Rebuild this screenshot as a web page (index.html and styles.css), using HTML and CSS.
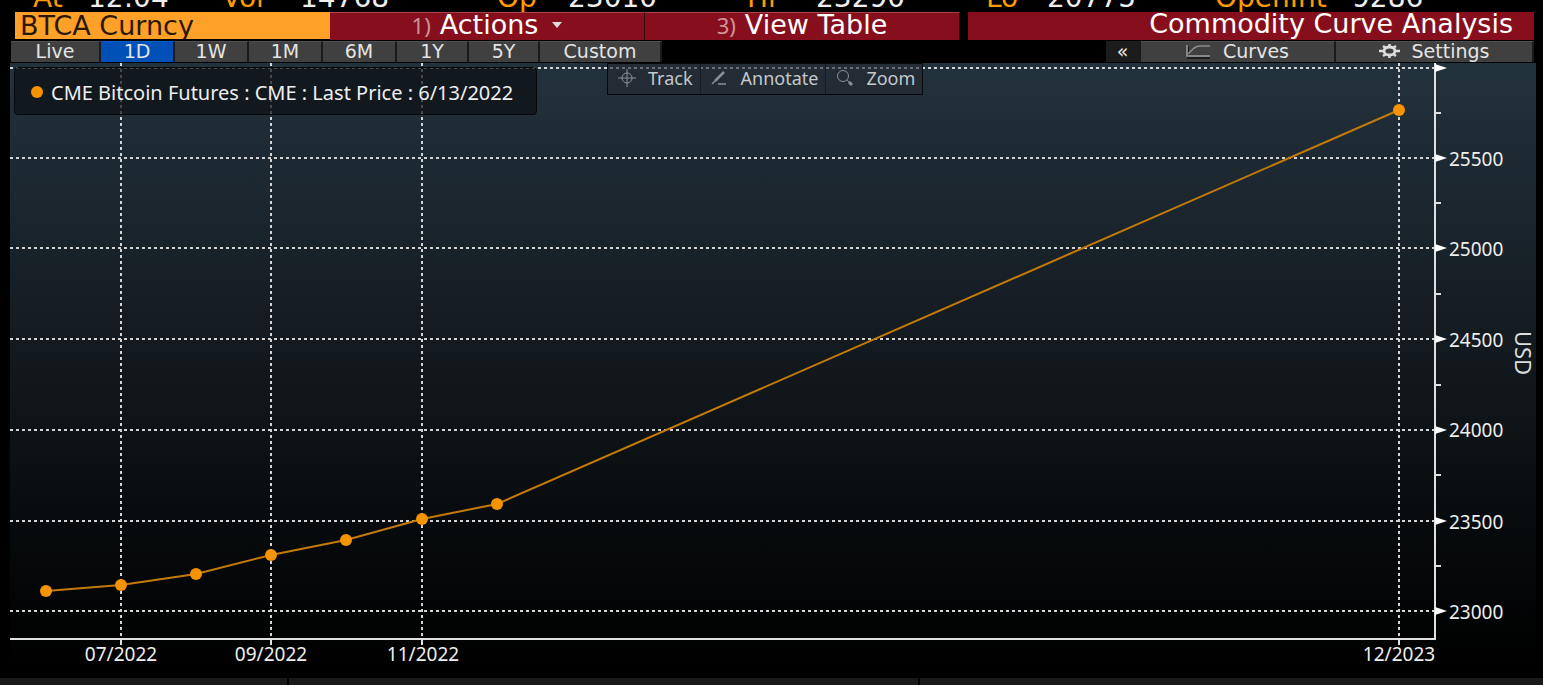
FILE: index.html
```html
<!DOCTYPE html>
<html lang="en">
<head>
  <meta charset="UTF-8">
  <title>Commodity Curve Analysis</title>
  <link rel="stylesheet" href="styles.css">
</head>
<body>

  <!-- QUOTE LINE -->
  <div class="quote">
    <span class="key">At</span><span>12:04</span>
    <span class="key">Vol</span><span>14768</span>
    <span class="key">Op</span><span>23010</span>
    <span class="key">Hi</span><span>23290</span>
    <span class="key">Lo</span><span>20775</span>
    <span class="key">OpenInt</span><span>9286</span>
  </div>

  <!-- MENU BAR -->
  <header class="menu">
    <input class="ticker" type="text" value="BTCA Curncy" aria-label="Security">
    <button class="menu-btn"><span class="num">1)</span> Actions
      <svg class="caret" width="10" height="6" viewBox="0 0 10 6"><path d="M0 0H10L5 6Z" fill="#ddd"/></svg>
    </button>
    <button class="menu-btn"><span class="num">3)</span> View Table</button>
    <h1>Commodity Curve Analysis</h1>
  </header>

  <!-- RANGE TABS -->
  <nav class="tabs">
    <button>Live</button>
    <button class="active">1D</button>
    <button>1W</button>
    <button>1M</button>
    <button>6M</button>
    <button>1Y</button>
    <button>5Y</button>
    <button>Custom</button>
    <span></span>
    <button class="collapse">«</button>
    <button>
      <svg width="25" height="16" viewBox="0 0 25 16" fill="none"><path d="M2 3V15H24" stroke="#1c1c1c" stroke-width="2"/><path d="M1 2V13H24" stroke="#a0a0a0" stroke-width="1.500"/><path d="M2 11L7 6Q10 3 14 3H24" stroke="#8c8c8c" stroke-width="1.500"/></svg>
      Curves
    </button>
    <button>
      <svg width="21" height="16" viewBox="0 0 21 16" fill="none" stroke="#ddd"><ellipse cx="10.500" cy="8" rx="5.500" ry="4" stroke-width="2.800"/><path d="M10.500 1V4M10.500 12V15M0 8H5M16 8H21M4 3L7 5M17 3L14 5M4 13L7 11M17 13L14 11" stroke-width="2.500"/></svg>
      Settings
    </button>
  </nav>

  <!-- CHART -->
  <main class="chart">
    <svg class="plot" viewBox="10 63 1526 609" role="img" aria-label="CME Bitcoin Futures curve">
      <g class="grid">
        <path d="M10 68H1435M10 158H1435M10 248H1435M10 339H1435M10 430H1435M10 521H1435M10 611H1435"/>
        <path d="M121 63V639M271 63V639M422 63V639M1399 63V639"/>
      </g>
      <path class="axis" d="M10 639H1435V63"/>
      <path class="tick" d="M1435 113h6M1435 203h6M1435 294h6M1435 385h6M1435 475h6M1435 566h6M121 639v6M271 639v6M422 639v6M1399 639v6"/>
      <path class="arrow" d="M1435 64l12 4l-12 4zM1435 154l12 4l-12 4zM1435 244l12 4l-12 4zM1435 335l12 4l-12 4zM1435 426l12 4l-12 4zM1435 517l12 4l-12 4zM1435 607l12 4l-12 4z"/>

      <polyline class="line" points="46,591 121,585 196,574 271,555 346,540 422,519 497,504 1399,110"/>
      <g class="dots">
        <circle cx="46" cy="591" r="6"/>
        <circle cx="121" cy="585" r="6"/>
        <circle cx="196" cy="574" r="6"/>
        <circle cx="271" cy="555" r="6"/>
        <circle cx="346" cy="540" r="6"/>
        <circle cx="422" cy="519" r="6"/>
        <circle cx="497" cy="504" r="6"/>
        <circle cx="1399" cy="110" r="6"/>
      </g>

      <g class="labels">
        <text x="1449" y="166">25500</text>
        <text x="1449" y="256">25000</text>
        <text x="1449" y="347">24500</text>
        <text x="1449" y="437">24000</text>
        <text x="1449" y="529">23500</text>
        <text x="1449" y="619">23000</text>
      </g>
      <g class="labels dates">
        <text x="121" y="661">07/2022</text>
        <text x="271" y="661">09/2022</text>
        <text x="423" y="661">11/2022</text>
        <text x="1399" y="661">12/2023</text>
      </g>
      <text class="unit" transform="translate(1515 353) rotate(90)">USD</text>
    </svg>

    <div class="legend"><span class="dot"></span>CME Bitcoin Futures : CME : Last Price : 6/13/2022</div>

    <div class="tools">
      <button>
        <svg width="18" height="18" viewBox="0 0 18 18" fill="none" stroke="#8a9095"><path d="M9 0V18M0 9H18"/><circle cx="9" cy="9" r="5"/></svg>
        Track
      </button>
      <button>
        <svg width="18" height="18" viewBox="0 0 18 18" fill="none" stroke="#8a9095"><path d="M4 12L13 3" stroke-width="2.500"/><path d="M1 15L4 12M7 15H15" stroke-width="1.500"/></svg>
        Annotate
      </button>
      <button>
        <svg width="18" height="18" viewBox="0 0 18 18" fill="none" stroke="#8a9095"><circle cx="7" cy="7" r="5.500"/><path d="M11 11L13 13"/><path d="M13 13L16 16" stroke-width="3"/></svg>
        Zoom
      </button>
    </div>
  </main>

  <footer class="panels"><div></div><div></div><div></div></footer>

</body>
</html>
```

FILE: styles.css
```css
* {
  box-sizing: border-box;
}

body {
  margin: 0;
  background-color: #000;
  color: #eee;
  font-family: "DejaVu Sans", Verdana, sans-serif;
  overflow-x: hidden;
}

button {
  display: flex;
  align-items: center;
  justify-content: center;
  margin: 0;
  padding: 0;
  border: 0;
  color: inherit;
  font-family: inherit;
  white-space: nowrap;
}

/* QUOTE LINE */
.quote {
  display: grid;
  grid-template-columns: 55fr 134fr 78fr 197fr 71fr 179fr 69fr 170fr 61fr 168fr 137fr 191fr;
  grid-template-rows: 10px;
  align-items: end;
  height: 12px;
  padding-left: 33px;
  overflow: hidden;
  font-size: 28px;
  line-height: 24px;
  white-space: nowrap;
}

.quote .key {
  color: #f90;
}

/* MENU BAR */
.menu {
  display: grid;
  grid-template-columns: 315fr 315fr 323fr 566fr;
  height: 28px;
  margin: 0 9px 0 15px;
  font-size: 27px;
}

.ticker {
  width: 100%;
  min-width: 0;
  height: 27px;
  margin: 0;
  padding: 0 5px;
  border: 0;
  background-color: #ffa028;
  color: #2a1800;
  font-family: inherit;
  font-size: 27px;
  line-height: 27px;
}

.menu-btn {
  padding-bottom: 3px;
  border-top: 1px solid #a5434f;
  border-right: 1px solid #3a080e;
  background-color: #870f1d;
  color: #fff;
  font-size: 27px;
  line-height: 24px;
}

.menu-btn + .menu-btn {
  margin-right: 8px;
}

.num {
  margin-right: 9px;
  color: #cf929a;
  font-family: "Noto Sans", sans-serif;
  font-size: 22px;
}

.caret {
  margin-left: 14px;
}

h1 {
  margin: 0;
  padding-right: 21px;
  background-color: #870f1d;
  color: #fff;
  font-size: 27px;
  font-weight: normal;
  line-height: 24px;
  text-align: right;
  white-space: nowrap;
}

/* RANGE TABS */
.tabs {
  display: grid;
  grid-template-columns: 90fr 74fr 74fr 74fr 74fr 72fr 71fr 122fr 444fr 35fr 195fr 198fr;
  height: 23px;
  margin: 0 9px 0 11px;
  padding: 1px 0;
}

.tabs button {
  gap: 12px;
  min-width: 0;
  padding-bottom: 2px;
  border-top: 1px solid #505050;
  border-right: 2px solid #1a1a1a;
  background-color: #404040;
  color: #e4e4e4;
  font-size: 19px;
  line-height: 18px;
}

.tabs .active {
  border-top-color: #0a5cc8;
  background-color: #0050b8;
}

.tabs .collapse {
  border-top-color: #1c1c1c;
  background-color: #1c1c1c;
}

/* CHART */
.chart {
  position: relative;
  margin: 0 7px 0 10px;
  background: linear-gradient(#22323c, #1e2a33 15%, #10161a 55%, #040607 85%, #000);
  font-family: "Noto Sans", sans-serif;
}

.plot {
  display: block;
  width: 100%;
  height: auto;
}

.grid path {
  fill: none;
  stroke: #d4d4d4;
  stroke-width: 2;
  stroke-dasharray: 3 3;
}

.axis {
  fill: none;
  stroke: #e0e0e0;
  stroke-width: 2;
}

.tick {
  stroke: #e0e0e0;
  stroke-width: 2;
}

.arrow {
  fill: #fff;
}

.line {
  fill: none;
  stroke: #c47a08;
  stroke-width: 2;
}

.dots {
  fill: #f59300;
}

.labels {
  fill: #eee;
  font-size: 19px;
}

.dates,
.unit {
  text-anchor: middle;
}

.unit {
  fill: #ddd;
  font-size: 22px;
}

.legend {
  position: absolute;
  top: 4px;
  left: 4px;
  display: flex;
  align-items: center;
  min-width: 523px;
  height: 48px;
  padding: 2px 16px 0 16px;
  border: 1px solid #05080a;
  border-radius: 4px;
  background-color: rgba(12, 16, 20, 0.7);
  font-size: 20px;
  white-space: nowrap;
}

.dot {
  width: 12px;
  height: 12px;
  margin-right: 8px;
  border-radius: 50%;
  background-color: #f59300;
}

.tools {
  position: absolute;
  top: 0;
  left: 597px;
  display: flex;
  height: 32px;
  border: 1px solid #05080a;
  background-color: rgba(36, 42, 48, 0.6);
}

.tools button {
  gap: 12px;
  padding: 0 7px 2px 10px;
  border-right: 1px solid #161c22;
  background: none;
  color: #c4c8cc;
  font-size: 18px;
}

.tools button:last-child {
  border-right: 0;
}

/* LOWER PANELS */
.panels {
  display: grid;
  grid-template-columns: 287fr 629fr 623fr;
  gap: 2px;
  margin-top: 6px;
}

.panels div {
  height: 7px;
  background-color: #191919;
}
```
